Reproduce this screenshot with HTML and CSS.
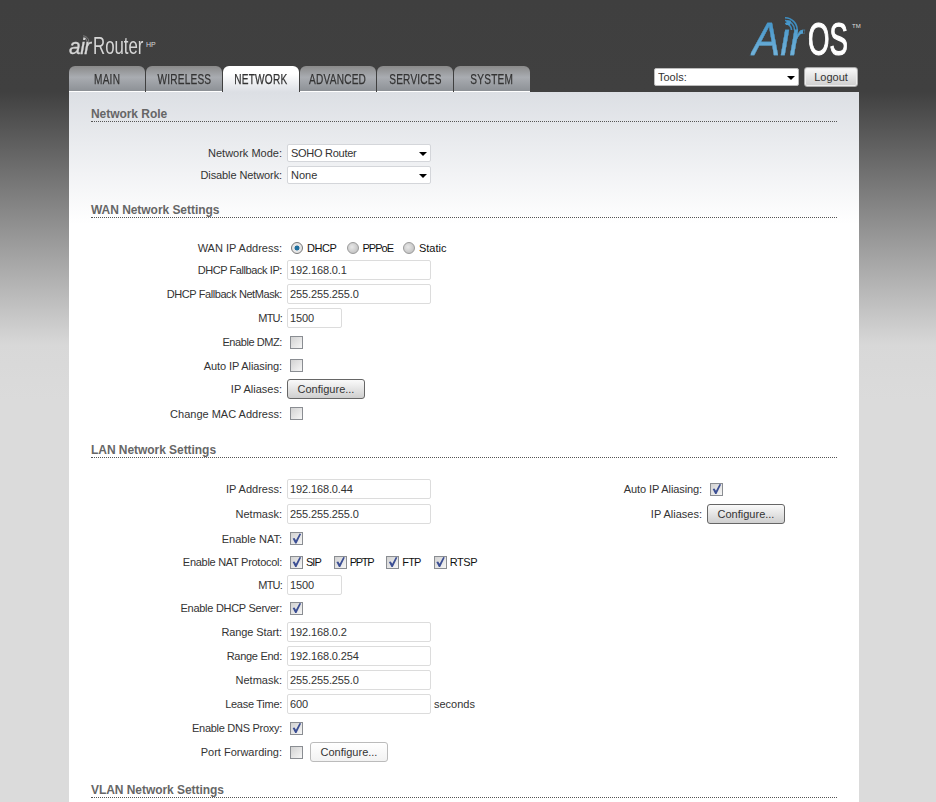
FILE: index.html
```html
<!DOCTYPE html>
<html lang="en">
<head>
<meta charset="utf-8">
<title>airRouter HP - Network</title>
<link rel="stylesheet" href="styles.css">
</head>
<body>
<div class="page">
  <header class="header">
    <div class="brand-row">
      <div class="product">
        <svg class="product-wifi" viewBox="0 0 8 8" aria-hidden="true"><path d="M1 2.5a4 4 0 0 1 4 4M1 .8a5.8 5.8 0 0 1 5.8 5.8" fill="none" stroke="#8a8a8a" stroke-width=".8"/></svg>
        <span class="product-air">air</span><span class="product-name">Router</span><span class="product-hp">HP</span>
      </div>
      <div class="airos">
        <svg class="airos-wifi" viewBox="0 0 14 14" aria-hidden="true"><path d="M1 6.5a6.5 6.5 0 0 1 6.5 6.500M1 3.500a9.500 9.500 0 0 1 9.500 9.500M1 .8a12.200 12.200 0 0 1 12.200 12.200" fill="none" stroke="#3f8dc0" stroke-width="1.600"/></svg>
        <span class="airos-air">Air</span><span class="airos-os">OS</span><span class="airos-tm">TM</span>
      </div>
    </div>
    <div class="nav-row">
      <nav class="tabs">
        <a class="tab"><span class="tab-text">MAIN</span></a>
        <a class="tab"><span class="tab-text">WIRELESS</span></a>
        <a class="tab tab-active"><span class="tab-text">NETWORK</span></a>
        <a class="tab"><span class="tab-text">ADVANCED</span></a>
        <a class="tab"><span class="tab-text">SERVICES</span></a>
        <a class="tab"><span class="tab-text">SYSTEM</span></a>
      </nav>
      <div class="tools">
        <div class="select select-tools"><select><option>Tools:</option></select></div>
        <button class="btn btn-logout" type="button">Logout</button>
      </div>
    </div>
  </header>

  <main class="panel">
    <section class="section section-role">
      <h2 class="heading">Network Role</h2>
      <div class="rows rows-role">
        <div class="row h22"><div class="pair"><label class="label">Network Mode:</label><div class="select"><select class="t2"><option>SOHO Router</option></select></div></div></div>
        <div class="row h22"><div class="pair"><label class="label t1">Disable Network:</label><div class="select"><select><option>None</option></select></div></div></div>
      </div>
    </section>

    <section class="section">
      <h2 class="heading">WAN Network Settings</h2>
      <div class="rows">
        <div class="row h21"><div class="pair"><label class="label">WAN IP Address:</label>
          <div class="options options-radio">
            <span class="opt t3"><input class="radio" type="radio" name="wan" checked>DHCP</span>
            <span class="opt t5"><input class="radio" type="radio" name="wan">PPPoE</span>
            <span class="opt"><input class="radio" type="radio" name="wan">Static</span>
          </div></div></div>
        <div class="row h24"><div class="pair"><label class="label t3">DHCP Fallback IP:</label><input class="text" value="192.168.0.1"></div></div>
        <div class="row h24"><div class="pair"><label class="label t3">DHCP Fallback NetMask:</label><input class="text" value="255.255.255.0"></div></div>
        <div class="row h24"><div class="pair"><label class="label t4">MTU:</label><input class="text text-short" value="1500"></div></div>
        <div class="row h24"><div class="pair"><label class="label t3">Enable DMZ:</label><input class="check" type="checkbox"></div></div>
        <div class="row h23"><div class="pair"><label class="label t1">Auto IP Aliasing:</label><input class="check" type="checkbox"></div></div>
        <div class="row h24"><div class="pair"><label class="label">IP Aliases:</label><button class="btn btn-dark" type="button">Configure...</button></div></div>
        <div class="row h25"><div class="pair"><label class="label">Change MAC Address:</label><input class="check" type="checkbox"></div></div>
      </div>
    </section>

    <section class="section">
      <h2 class="heading">LAN Network Settings</h2>
      <div class="rows rows-last">
        <div class="row h24"><div class="pair"><label class="label">IP Address:</label><input class="text" value="192.168.0.44"></div>
          <div class="pair pair-right"><label class="label label-right t1">Auto IP Aliasing:</label><input class="check" type="checkbox" checked></div></div>
        <div class="row h25"><div class="pair"><label class="label">Netmask:</label><input class="text" value="255.255.255.0"></div>
          <div class="pair pair-right"><label class="label label-right">IP Aliases:</label><button class="btn btn-dark" type="button">Configure...</button></div></div>
        <div class="row h25"><div class="pair"><label class="label">Enable NAT:</label><input class="check" type="checkbox" checked></div></div>
        <div class="row h22"><div class="pair"><label class="label t2">Enable NAT Protocol:</label>
          <div class="options options-check">
            <span class="opt t5"><input class="check" type="checkbox" checked>SIP</span>
            <span class="opt t6"><input class="check" type="checkbox" checked>PPTP</span>
            <span class="opt t4"><input class="check" type="checkbox" checked>FTP</span>
            <span class="opt t3"><input class="check" type="checkbox" checked>RTSP</span>
          </div></div></div>
        <div class="row h23"><div class="pair"><label class="label t4">MTU:</label><input class="text text-short" value="1500"></div></div>
        <div class="row h24"><div class="pair"><label class="label t2">Enable DHCP Server:</label><input class="check" type="checkbox" checked></div></div>
        <div class="row h24"><div class="pair"><label class="label t1">Range Start:</label><input class="text" value="192.168.0.2"></div></div>
        <div class="row h24"><div class="pair"><label class="label t2">Range End:</label><input class="text" value="192.168.0.254"></div></div>
        <div class="row h24"><div class="pair"><label class="label">Netmask:</label><input class="text" value="255.255.255.0"></div></div>
        <div class="row h24"><div class="pair"><label class="label t2">Lease Time:</label><input class="text" value="600"><span class="unit">seconds</span></div></div>
        <div class="row h24"><div class="pair"><label class="label t2">Enable DNS Proxy:</label><input class="check" type="checkbox" checked></div></div>
        <div class="row h24"><div class="pair"><label class="label">Port Forwarding:</label><input class="check" type="checkbox"><button class="btn btn-light" type="button">Configure...</button></div></div>
      </div>
    </section>

    <section class="section">
      <h2 class="heading">VLAN Network Settings</h2>
    </section>
  </main>
</div>
</body>
</html>
```
FILE: styles.css
```css
* { box-sizing: border-box; }
html, body { margin: 0; padding: 0; height: 802px; overflow: hidden; }
body {
  font-family: "Liberation Sans", Arial, sans-serif;
  font-size: 11px;
  color: #333;
  background: linear-gradient(to bottom, #3f3f3f 0, #404040 92px, #d8d8d8 345px, #dbdbdb 400px, #dbdbdb 100%);
}
.page { width: 790px; margin-left: 69px; }

/* header */
.header { height: 92px; display: flex; flex-direction: column; }
.brand-row { height: 66px; position: relative; display: flex; justify-content: space-between; }
.product { position: relative; margin-top: 33px; height: 26px; width: 100px; color: #d6d6d6; white-space: nowrap; display: flex; align-items: baseline; }
.product-wifi { position: absolute; left: 13px; top: 2px; width: 8px; height: 8px; }
.product-air { font: italic 22px/26px "Liberation Sans", sans-serif; width: 24px; display: inline-block; transform: scaleX(.95); transform-origin: left; letter-spacing: -.5px; -webkit-text-stroke: .3px #d6d6d6; }
.product-name { font: 24px/26px "Liberation Sans", sans-serif; width: 53px; display: inline-block; transform: scaleX(.7); transform-origin: left; }
.product-hp { font: 7px/26px "Liberation Sans", sans-serif; position: relative; top: -7px; }
.airos { position: relative; width: 110px; height: 50px; margin-top: 14px; margin-right: -2px; display: flex; align-items: baseline; white-space: nowrap; }
.airos-wifi { position: absolute; left: 33px; top: 3px; width: 14px; height: 14px; }
.airos-air { font: italic 46px/50px "Liberation Sans", sans-serif; width: 57px; display: inline-block; padding-left: 1px; transform: scaleX(.92); transform-origin: left; background: linear-gradient(to bottom, #3a8fc6, #7fbade); -webkit-background-clip: text; background-clip: text; color: transparent; -webkit-text-stroke: .3px #4f9fd0; }
.airos-os { font: 46px/50px "Liberation Sans", sans-serif; width: 44px; display: inline-block; transform: scaleX(.6); transform-origin: left; color: #fff; -webkit-text-stroke: 1.2px #fff; }
.airos-tm { font: 6px/8px "Liberation Sans", sans-serif; color: #ddd; position: absolute; left: 101px; top: 8px; }

.nav-row { height: 26px; display: flex; justify-content: space-between; align-items: flex-start; }
.tabs { display: flex; gap: 1px; height: 26px; }
.tab {
  width: 76px; height: 26px;
  display: flex; justify-content: center;
  border-radius: 6px 6px 0 0;
  border-bottom: 1px solid #fff;
  background: linear-gradient(to bottom, #8a8a8a 0, #a9acb1 45%, #8d9196 100%);
  color: #333;
  font: 14px/26px "Liberation Sans", sans-serif;
  white-space: nowrap;
}
.tab-text { display: inline-block; transform: scaleX(.72); letter-spacing: .3px; -webkit-text-stroke: .25px #333; }
.tab-active { background: linear-gradient(to bottom, #fff 0, #fff 30%, #dcdfe4 100%); border-bottom: 0; }
.tools { display: flex; gap: 5px; align-items: flex-start; margin-top: 1px; margin-right: 1px; }

/* controls */
.select { position: relative; width: 144px; height: 18px; }
.select::after { content: ""; position: absolute; right: 4px; top: 8px; border: 4px solid transparent; border-top-color: #000; border-bottom: 0; pointer-events: none; }
.select select {
  appearance: none; -webkit-appearance: none;
  width: 100%; height: 100%;
  padding: 0 3px;
  border: 1px solid #d4d6da;
  border-radius: 2px;
  background: #fff;
  color: #333;
  font: 11px "Liberation Sans", sans-serif;
}
.select-tools { width: 145px; margin-top: 1px; }
.select-tools select { border-color: #bbb; }
.btn {
  font: 11px "Liberation Sans", sans-serif;
  color: #333;
  height: 20px;
  padding: 0;
  border-radius: 3px;
  background: linear-gradient(to bottom, #fafafa, #cfcfcf);
}
.btn-logout { width: 54px; border: 1px solid #aaa; box-shadow: inset 0 0 0 1px #eee; }
.btn-dark { width: 78px; border: 1px solid #666; }
.btn-light { width: 78px; border: 1px solid #bbb; background: linear-gradient(to bottom, #fff, #f2f2f2); margin-left: 2px; }

/* panel */
.panel { width: 790px; height: 710px; padding: 0 22px; overflow: hidden; background: linear-gradient(to bottom, #dcdfe4 0, #fff 132px); }
.heading {
  margin: 0;
  padding-top: 17px;
  font: bold 12px/14px "Liberation Sans", sans-serif;
  color: #666;
  letter-spacing: -.05px;
  border-bottom: 1px dotted #555;
}
.section-role .heading { padding-top: 15px; }
.rows { display: flex; flex-direction: column; margin-top: 19px; }
.rows-role { margin-top: 20px; }
.rows-last { margin-bottom: 2px; }
.row { display: flex; justify-content: space-between; align-items: center; }
.h21 { height: 21px; }
.h22 { height: 22px; }
.h23 { height: 23px; }
.h24 { height: 24px; }
.h25 { height: 25px; }
.pair { display: flex; align-items: center; gap: 5px; }
.pair-right { width: 317px; }
.label { width: 191px; text-align: right; color: #333; white-space: nowrap; }
.label-right { width: 182px; }
.t1 { letter-spacing: -.1px; }
.t2 { letter-spacing: -.28px; }
.t3 { letter-spacing: -.42px; }
.t4 { letter-spacing: -.8px; }
.t5 { letter-spacing: -1px; }
.t6 { letter-spacing: -1.3px; }
.text { width: 144px; height: 20px; padding: 0 2px; border: 1px solid #dcdcdc; border-radius: 2px; background: #fff; color: #333; font: 11px "Liberation Sans", sans-serif; letter-spacing: -.12px; }
.text-short { width: 55px; }
.unit { margin-left: -2px; }
.options { display: flex; align-items: center; }
.options-radio { gap: 10px; }
.options-check { gap: 13px; }
.opt { display: inline-flex; align-items: center; gap: 3px; color: #111; }
.options-radio .opt { gap: 4px; }
.check, .radio { appearance: none; -webkit-appearance: none; margin: 0; position: relative; flex: none; }
.check { width: 13px; height: 13px; margin-left: 3px; border: 1px solid #8a8d92; background: linear-gradient(135deg, #d2d2d2, #f6f6f6); }
.check:checked::after { content: ""; position: absolute; inset: 0; background: #3c4f94; clip-path: polygon(15% 50%, 32% 45%, 45% 65%, 78% 5%, 92% 10%, 50% 95%, 38% 95%); }
.radio { width: 12px; height: 12px; margin-left: 4px; border: 1px solid #9a9a9a; border-radius: 50%; background: radial-gradient(circle at 40% 40%, #e8e8e8, #b8b8b8); }
.radio:checked { border-color: #777; background: radial-gradient(circle, #1f6f9f 0, #1f6f9f 30%, #e6e6e6 40%); }
.options-radio .opt:not(:first-child) .radio { margin-left: 0; }
.options-check .opt:not(:first-child) .check { margin-left: 0; }
```
